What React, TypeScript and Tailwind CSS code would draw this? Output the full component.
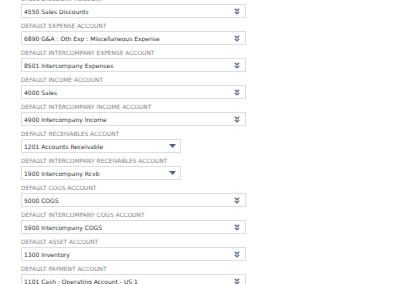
const rows: { label: string; value: string; narrow?: boolean }[] = [
  { label: "Sales Discount Account", value: "4550 Sales Discounts" },
  { label: "Default Expense Account", value: "6890 G&A : Oth Exp : Miscellaneous Expense" },
  { label: "Default Intercompany Expense Account", value: "8501 Intercompany Expenses" },
  { label: "Default Income Account", value: "4000 Sales" },
  { label: "Default Intercompany Income Account", value: "4900 Intercompany Income" },
  { label: "Default Receivables Account", value: "1201 Accounts Receivable", narrow: true },
  { label: "Default Intercompany Receivables Account", value: "1900 Intercompany Rcvb", narrow: true },
  { label: "Default COGS Account", value: "5000 COGS" },
  { label: "Default Intercompany COGS Account", value: "5900 Intercompany COGS" },
  { label: "Default Asset Account", value: "1300 Inventory" },
  { label: "Default Payment Account", value: "1101 Cash : Operating Account - US 1" },
];

function DoubleChevron() {
  return (
    <svg width="6" height="7" viewBox="0 0 6 7" className="shrink-0">
      <path d="M0.8 0.8 L3 2.8 L5.2 0.8" fill="none" stroke="#5d6f90" strokeWidth="1.3" />
      <path d="M0.8 3.8 L3 5.8 L5.2 3.8" fill="none" stroke="#5d6f90" strokeWidth="1.3" />
    </svg>
  );
}

function Caret() {
  return (
    <svg width="7" height="4" viewBox="0 0 7 4" className="shrink-0">
      <path d="M0 0 H7 L3.5 4 Z" fill="#52668a" />
    </svg>
  );
}

export default function App() {
  return (
    <div
      className="flex h-[284px] w-[400px] flex-col overflow-hidden bg-white pl-[21px]"
      style={{ fontFamily: '"DejaVu Sans", Verdana, sans-serif' }}
    >
      <div className="-mt-[6px] flex flex-col">
        {rows.map((r) => (
          <div key={r.label} className="flex h-[27px] flex-col">
            <div className="flex h-[10px] items-center text-[5.9px] uppercase text-[#858585]">
              {r.label}
            </div>
            <div
              className={
                r.narrow
                  ? "flex h-[14px] w-[160px] items-center justify-between border border-[#dedede] bg-white pl-[2px] pr-[4px] text-[6px] text-[#333]"
                  : "flex h-[14px] w-[225px] items-center justify-between border border-[#dedede] bg-white pl-[2px] pr-[5px] text-[6px] text-[#333]"
              }
            >
              <span className="whitespace-nowrap">{r.value}</span>
              {r.narrow ? <Caret /> : <DoubleChevron />}
            </div>
          </div>
        ))}
      </div>
    </div>
  );
}
